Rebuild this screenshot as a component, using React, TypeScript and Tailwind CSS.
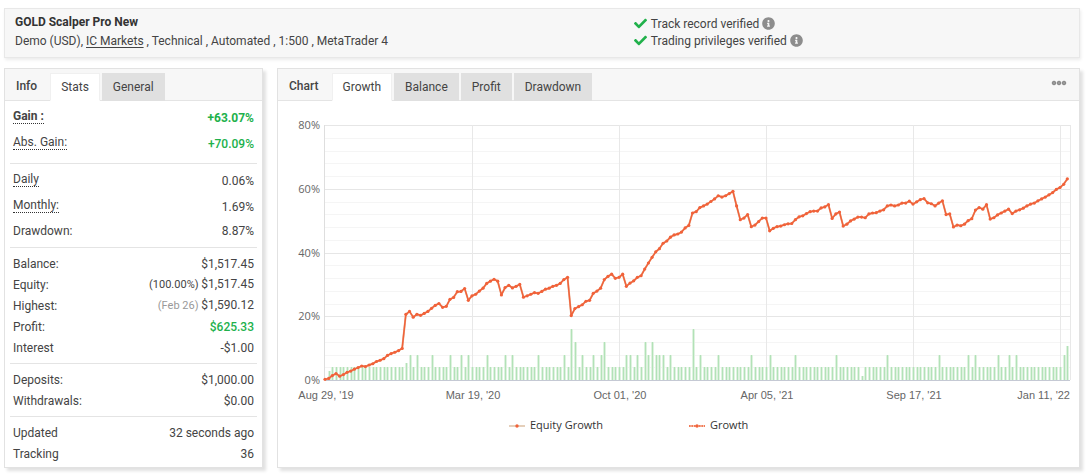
import React, { useState } from "react";
import clsx from "clsx";
import { FaCheck, FaInfoCircle } from "react-icons/fa";

interface StatRow {
  label: string;
  value: string;
  note?: string;
  noteClass?: string;
  valueClass?: string;
  hint?: boolean;
  bold?: boolean;
}

interface StatGroup {
  className: string;
  rowClass: string;
  rows: StatRow[];
}

const statGroups: StatGroup[] = [
  {
    className: "pt-0.5 pb-2",
    rowClass: "h-[26px]",
    rows: [
      { label: "Gain :", value: "+63.07%", valueClass: "text-[#21b14b]", hint: true, bold: true },
      { label: "Abs. Gain:", value: "+70.09%", valueClass: "text-[#21b14b] font-medium", hint: true },
    ],
  },
  {
    className: "border-t pt-0.5 pb-[3px]",
    rowClass: "h-[26px]",
    rows: [
      { label: "Daily", value: "0.06%", hint: true },
      { label: "Monthly:", value: "1.69%", hint: true },
      { label: "Drawdown:", value: "8.87%" },
    ],
  },
  {
    className: "border-t pt-[5px] pb-[5px]",
    rowClass: "h-[21px]",
    rows: [
      { label: "Balance:", value: "$1,517.45" },
      { label: "Equity:", value: "$1,517.45", note: "(100.00%)" },
      { label: "Highest:", value: "$1,590.12", note: "(Feb 26)", noteClass: "text-[#999]" },
      { label: "Profit:", value: "$625.33", valueClass: "text-[#21b14b] font-medium" },
      { label: "Interest", value: "-$1.00" },
    ],
  },
  {
    className: "border-t pt-[5px] pb-[5px]",
    rowClass: "h-[21px]",
    rows: [
      { label: "Deposits:", value: "$1,000.00" },
      { label: "Withdrawals:", value: "$0.00" },
    ],
  },
  {
    className: "border-t pt-[5px] pb-[3px]",
    rowClass: "h-[21px]",
    rows: [
      { label: "Updated", value: "32 seconds ago" },
      { label: "Tracking", value: "36" },
    ],
  },
];

// Growth in percent, one value per trading step
const growth = [
  0.2, 0.5, 1.4, 2.0, 1.2, 1.7, 2.4, 2.8, 3.4, 3.9, 4.4, 4.2, 4.7, 5.1, 5.8, 6.2, 6.7, 7.7, 8.3, 8.7,
  9.2, 9.9, 20.6, 21.5, 19.7, 20.6, 20.3, 20.9, 21.5, 22.5, 23.4, 24.0, 22.8, 23.1, 25.3, 25.9, 27.7, 27.8, 28.7, 25.0,
  26.4, 26.9, 27.9, 28.8, 30.3, 31.0, 31.6, 31.0, 26.7, 29.0, 29.7, 28.9, 29.4, 30.0, 26.0, 26.4, 26.9, 27.4, 27.2, 27.8,
  28.5, 28.8, 29.4, 29.7, 30.3, 31.5, 32.2, 20.2, 22.4, 23.0, 23.6, 24.7, 25.0, 27.2, 27.9, 28.8, 31.5, 32.5, 33.2, 31.9,
  32.2, 33.2, 29.4, 30.4, 31.1, 32.2, 32.7, 34.8, 36.7, 38.5, 40.2, 41.2, 42.9, 43.6, 44.8, 45.5, 45.8, 46.4, 47.7, 48.5,
  52.4, 52.8, 54.1, 54.6, 55.2, 56.0, 56.8, 57.8, 57.4, 57.8, 58.5, 59.2, 54.6, 50.3, 50.8, 51.9, 48.1, 48.6, 49.7, 50.8,
  50.8, 46.8, 47.6, 48.1, 48.3, 48.7, 49.0, 49.1, 50.3, 51.2, 51.5, 52.2, 52.8, 53.0, 53.0, 54.0, 54.3, 55.0, 50.7, 52.1,
  52.7, 48.3, 48.9, 49.9, 50.5, 51.1, 51.1, 50.9, 52.1, 52.4, 52.5, 53.0, 53.4, 54.6, 54.9, 54.6, 54.9, 55.5, 55.5, 56.1,
  55.2, 55.9, 56.6, 56.9, 55.6, 55.3, 54.6, 55.5, 56.2, 51.9, 52.1, 48.0, 48.6, 48.4, 48.9, 50.0, 50.6, 53.3, 54.1, 53.6,
  55.0, 50.5, 50.9, 51.8, 52.4, 53.0, 53.6, 52.2, 53.0, 53.4, 53.9, 54.6, 55.2, 55.5, 56.2, 56.8, 57.4, 58.1, 58.8, 59.8,
  60.4, 61.4, 63.1,
];

// Bars are 4% high unless listed here
const barHeights: Record<number, number> = {
  1: 2.7, 22: 5.4, 23: 8, 25: 8, 29: 8, 34: 8, 37: 8, 39: 8, 44: 8, 49: 8, 51: 8, 58: 8, 65: 8,
  67: 16, 68: 12, 70: 8, 73: 8, 75: 8, 76: 12, 82: 8, 83: 8, 85: 8, 87: 12, 88: 8, 89: 12,
  90: 8, 91: 8, 92: 8, 94: 8, 100: 16, 102: 8, 107: 8, 116: 8, 121: 8, 128: 8, 139: 8, 146: 1.3,
  153: 8, 167: 8, 175: 8, 177: 8, 183: 8, 186: 8, 188: 8, 201: 8, 202: 10.8,
};

const xLabels = ["Aug 29, '19", "Mar 19, '20", "Oct 01, '20", "Apr 05, '21", "Sep 17, '21", "Jan 11, '22"];
const yLabels = [0, 20, 40, 60, 80];

const STEP = 3.675;
const LEFT = 47;
const RIGHT = 792;
const BOTTOM = 279;
const TOP = 24;

const px = (i: number) => LEFT + i * STEP;
const py = (v: number) => BOTTOM - (v * (BOTTOM - TOP)) / 80;

function GrowthChart() {
  const points = growth.map((v, i) => `${px(i)},${py(v)}`).join(" ");

  return (
    <svg viewBox="0 0 801 366" className="block w-full h-auto" role="img" aria-label="Growth chart">
      {/* Grid */}
      <g shapeRendering="crispEdges">
        {Array.from({ length: 21 }, (_, i) => (
          <line
            key={i}
            x1={LEFT}
            x2={RIGHT}
            y1={Math.round(py(i * 4)) + 0.5}
            y2={Math.round(py(i * 4)) + 0.5}
            stroke={i % 5 === 0 ? "#e6e6e6" : "#f5f5f5"}
          />
        ))}
        {[1, 2, 3, 4, 5].map((i) => (
          <line key={i} x1={LEFT + i * 147 + 0.5} x2={LEFT + i * 147 + 0.5} y1={TOP} y2={BOTTOM} stroke="#e8e8e8" />
        ))}
        <line x1="46.5" x2="46.5" y1={TOP} y2={BOTTOM} stroke="#dedede" />
        <line x1={RIGHT + 0.5} x2={RIGHT + 0.5} y1={TOP} y2={BOTTOM} stroke="#e8e8e8" />
      </g>

      {/* Bars */}
      <g shapeRendering="crispEdges">
        {growth.slice(1).map((_, k) => {
          const i = k + 1;
          const y = Math.round(py(barHeights[i] ?? 4));
          const x = Math.round(px(i)) - 1;
          return (
            <g key={i}>
              <rect x={x} y={y} width="3" height={BOTTOM - y} fill="#dff2e0" />
              <rect x={x + 1} y={y} width="1" height={BOTTOM - y} fill="#b2e2b7" />
            </g>
          );
        })}
        <line x1={LEFT} x2={RIGHT} y1={BOTTOM + 0.5} y2={BOTTOM + 0.5} stroke="#c5c9d4" />
      </g>

      {/* Growth line */}
      <polyline points={points} fill="none" stroke="#e3b99c" strokeWidth="2" strokeLinejoin="round" />
      <polyline points={points} fill="none" stroke="#f1623a" strokeWidth="1.5" strokeLinejoin="round" />
      {growth.map((v, i) => (
        <circle key={i} cx={px(i)} cy={py(v)} r="1.6" fill="#f1623a" />
      ))}

      {/* Axis labels */}
      <g fontSize="11" fill="#666" fontFamily="'Open Sans', sans-serif" textAnchor="end">
        {yLabels.map((v) => (
          <text key={v} x="42" y={py(v) + 4}>
            {v}%
          </text>
        ))}
      </g>
      <g fontSize="11" fill="#666" fontFamily="'Liberation Sans', Arial, sans-serif">
        {xLabels.map((label, i) => (
          <text
            key={label}
            x={i === 5 ? RIGHT : LEFT + i * 147 + 1}
            y="298"
            textAnchor={i === 5 ? "end" : "middle"}
          >
            {label}
          </text>
        ))}
      </g>

      {/* Legend */}
      <g fontSize="11" fill="#333" fontFamily="'Open Sans', sans-serif">
        <line x1="231" x2="247" y1="325" y2="325" stroke="#dcbfa3" strokeWidth="1.5" />
        <circle cx="239" cy="325" r="1.7" fill="#f1623a" />
        <text x="252" y="328">
          Equity Growth
        </text>
        <line x1="411" x2="427" y1="325" y2="325" stroke="#f3b79c" strokeWidth="1.5" />
        <line x1="411" x2="427" y1="325" y2="325" stroke="#f1623a" strokeWidth="1.5" strokeDasharray="1.5 1" />
        <circle cx="419" cy="325" r="1.7" fill="#f1623a" />
        <text x="432" y="328">
          Growth
        </text>
      </g>
    </svg>
  );
}

interface TabBarProps {
  title: string;
  tabs: string[];
  children?: React.ReactNode;
}

function TabBar({ title, tabs, children }: TabBarProps) {
  const [active, setActive] = useState(tabs[0]);

  return (
    <div className="flex h-8 items-end border-b border-[#e4e4e4] bg-[#f7f7f7]">
      <h2 className="pl-[11px] pr-[13px] leading-7 font-medium">{title}</h2>
      <div className="flex items-end gap-0.5" role="tablist">
        {tabs.map((tab) => (
          <button
            key={tab}
            type="button"
            role="tab"
            aria-selected={tab === active}
            onClick={() => setActive(tab)}
            className={clsx(
              "-mb-px h-7 border px-2.5 leading-6",
              tab === active ? "border-[#f0f0f0] border-b-white bg-white" : "border-[#e0e0e0] bg-[#e0e0e0]"
            )}
          >
            {tab}
          </button>
        ))}
      </div>
      {children}
    </div>
  );
}

function Verified({ text }: { text: string }) {
  return (
    <div className="flex h-[17px] items-center">
      <FaCheck className="mr-1 h-[13px] w-[13px] text-[#21b14b]" />
      <span>{text}</span>
      <FaInfoCircle className="ml-[3px] h-[13px] w-[13px] text-[#8d8d8d]" />
    </div>
  );
}

export default function App() {
  return (
    <div className="bg-white pt-2 pr-[7px] pb-2 pl-1 font-['Roboto',sans-serif] text-xs text-[#444]">
      {/* Account header */}
      <header className="flex border border-[#e8e8e8] bg-[#f7f7f7] px-2.5 pt-1 pb-1.5 shadow-[1px_2px_3px_rgba(0,0,0,0.08)]">
        <div className="w-7/12">
          <h1 className="leading-[18px] font-bold text-[#333]">GOLD Scalper Pro New</h1>
          <p className="leading-5">
            Demo (USD),{" "}
            <a href="#" className="underline underline-offset-2">
              IC Markets
            </a>{" "}
            , Technical , Automated , 1:500 , MetaTrader 4
          </p>
        </div>
        <div className="w-5/12 pt-0.5 pl-1">
          <Verified text="Track record verified" />
          <Verified text="Trading privileges verified" />
        </div>
      </header>

      <div className="mt-2.5 flex items-start gap-[14px]">
        {/* Stats */}
        <section className="w-[259px] shrink-0 border border-[#e2e2e2] bg-white shadow-[3px_3px_3px_rgba(0,0,0,0.12)]">
          <TabBar title="Info" tabs={["Stats", "General"]} />
          {statGroups.map((group, i) => (
            <dl key={i} className={clsx("mx-[5px] border-[#e4e4e4] px-[3px]", group.className)}>
              {group.rows.map((row) => (
                <div
                  key={row.label}
                  className={clsx("flex items-center justify-between", group.rowClass, row.bold && "font-bold")}
                >
                  <dt className={clsx(row.hint && "border-b border-dotted border-[#333] leading-[14px]")}>
                    {row.label}
                  </dt>
                  <dd className={clsx(row.valueClass, row.hint && "pt-[3px]")}>
                    {row.note && <span className={clsx("text-[11px]", row.noteClass)}>{row.note} </span>}
                    {row.value}
                  </dd>
                </div>
              ))}
            </dl>
          ))}
        </section>

        {/* Chart */}
        <section className="min-w-0 flex-1 border border-[#e2e2e2] bg-white shadow-[3px_3px_3px_rgba(0,0,0,0.12)]">
          <TabBar title="Chart" tabs={["Growth", "Balance", "Profit", "Drawdown"]}>
            <button type="button" aria-label="More options" className="mr-3 mb-3.5 ml-auto">
              <svg viewBox="0 0 16 6" className="h-1.5 w-4">
                {[3, 8, 13].map((cx) => (
                  <circle key={cx} cx={cx} cy="3" r="1.8" fill="#999" stroke="#858585" strokeWidth="1" />
                ))}
              </svg>
            </button>
          </TabBar>
          <GrowthChart />
        </section>
      </div>
    </div>
  );
}
